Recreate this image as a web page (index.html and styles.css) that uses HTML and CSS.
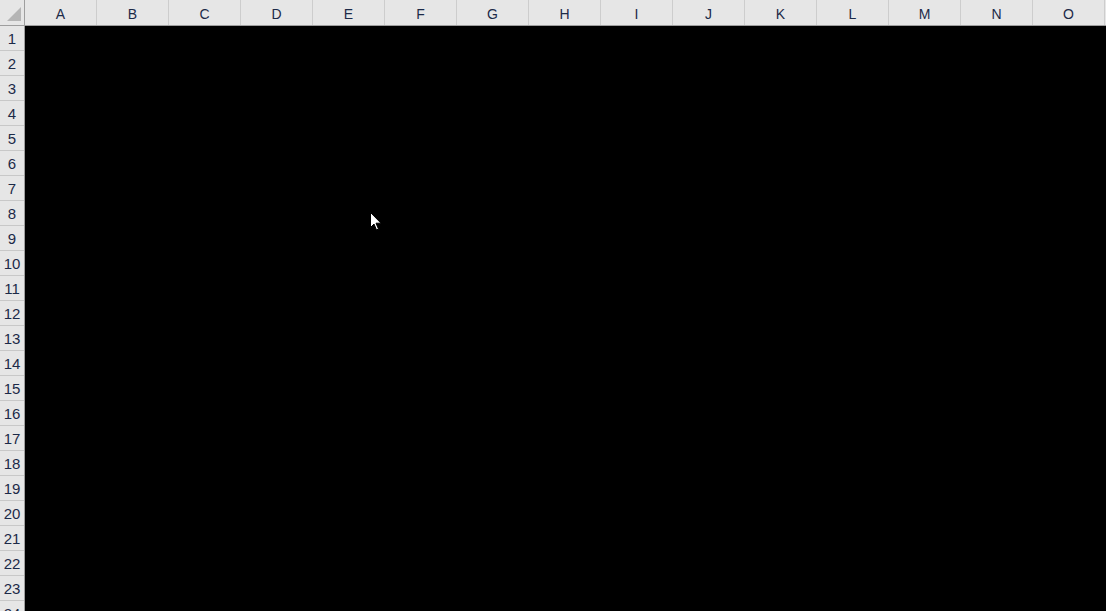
FILE: index.html
```html
<!DOCTYPE html>
<html>
<head>
<meta charset="utf-8">
<link rel="stylesheet" href="styles.css">
</head>
<body>
<div class="sheet">
  <div class="colhead">
    <div class="corner"><div class="tri"></div></div>
    <div class="col">A</div><div class="col">B</div><div class="col">C</div><div class="col">D</div><div class="col">E</div><div class="col">F</div><div class="col">G</div><div class="col">H</div><div class="col">I</div><div class="col">J</div><div class="col">K</div><div class="col">L</div><div class="col">M</div><div class="col">N</div><div class="col">O</div>
  </div>
  <div class="body">
    <div class="rowhead">
      <div class="row">1</div><div class="row">2</div><div class="row">3</div><div class="row">4</div><div class="row">5</div><div class="row">6</div><div class="row">7</div><div class="row">8</div><div class="row">9</div><div class="row">10</div><div class="row">11</div><div class="row">12</div><div class="row">13</div><div class="row">14</div><div class="row">15</div><div class="row">16</div><div class="row">17</div><div class="row">18</div><div class="row">19</div><div class="row">20</div><div class="row">21</div><div class="row">22</div><div class="row">23</div><div class="row">24</div>
    </div>
    <div class="grid"></div>
  </div>
  <svg class="cursor" width="12" height="20" viewBox="0 0 12 20">
    <path d="M0.5 0.5 L0.5 15.5 L4 12 L6.5 18 L8.5 17 L6 11.2 L11 11.2 Z" fill="#fff" stroke="#000" stroke-width="1"/>
  </svg>
</div>
</body>
</html>
```
FILE: styles.css
```css
html, body {
  margin: 0;
  padding: 0;
  background: #000;
  width: 1106px;
  height: 611px;
  overflow: hidden;
}
.sheet {
  position: relative;
  width: 1106px;
  height: 611px;
  font-family: "Liberation Sans", "Noto Sans CJK JP", sans-serif;
  font-size: 14px;
  color: #1c2a48;
}
.colhead {
  display: flex;
  height: 25px;
  background: #e6e6e6;
  border-bottom: 1px solid #9e9e9e;
}
.corner {
  width: 24px;
  flex: none;
  border-right: 1px solid #9e9e9e;
  position: relative;
}
.tri {
  position: absolute;
  left: 7px;
  top: 7px;
  width: 0;
  height: 0;
  border-left: 14px solid transparent;
  border-bottom: 14px solid #b5b5b5;
}
.col {
  width: 72px;
  flex: none;
  border-right: 1px solid #cdcdcd;
  display: flex;
  align-items: center;
  justify-content: center;
  line-height: 1;
  padding-top: 2px;
  box-sizing: border-box;
  height: 25px;
}
.body {
  display: flex;
}
.rowhead {
  width: 24px;
  flex: none;
  background: #e6e6e6;
  border-right: 1px solid #9e9e9e;
}
.row {
  height: 24px;
  border-bottom: 1px solid #c8c8c8;
  display: flex;
  align-items: center;
  justify-content: center;
  line-height: 1;
  font-size: 15px;
}
.grid {
  flex: 1;
  background: #000;
}
.cursor {
  position: absolute;
  left: 370px;
  top: 212px;
}
```
